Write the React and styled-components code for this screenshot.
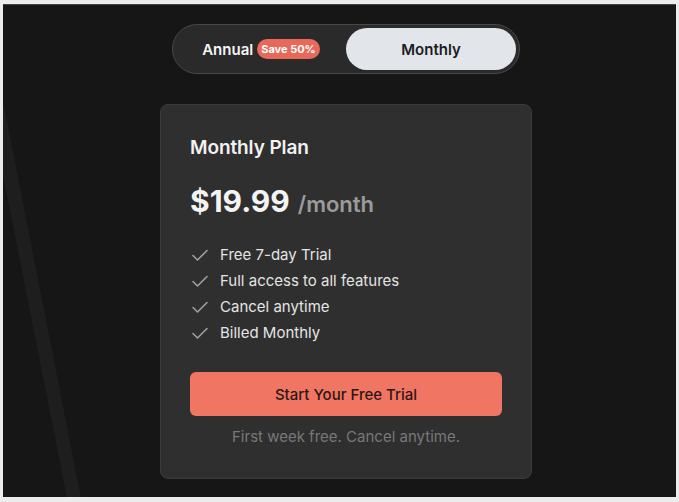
import React, { useState } from "react";
import styled, { createGlobalStyle } from "styled-components";

const Global = createGlobalStyle`
  html, body { margin: 0; padding: 0; background: #ececec; }
  body { font-family: Inter, "Noto Sans", "Liberation Sans", sans-serif; }
  * { box-sizing: border-box; }
`;

const Frame = styled.div`
  position: relative;
  margin: 4px 3px 5px 3px;
  height: 493px;
  background: #161616;
  overflow: hidden;
  display: flex;
  flex-direction: column;
  align-items: center;
  padding: 19px 0 0 13px;
  border-top: 1px solid #444;
`;

const Streak = styled.svg`
  position: absolute;
  left: 0;
  top: 0;
  pointer-events: none;
`;

const Toggle = styled.div`
  position: relative;
  width: 348px;
  height: 50px;
  padding: 3px;
  border-radius: 25px;
  background: #2a2a2a;
  border: 1px solid #474747;
  display: grid;
  grid-template-columns: 1fr 1fr;
`;

const ToggleOption = styled.button`
  border: none;
  border-radius: 22px;
  background: ${(p) => (p.$active ? "#e2e6ea" : "transparent")};
  color: ${(p) => (p.$active ? "#1c1c1c" : "#f4f4f4")};
  font-family: inherit;
  font-size: 15px;
  font-weight: 600;
  display: flex;
  align-items: center;
  justify-content: center;
  gap: 4px;
  cursor: pointer;
  padding: 0;
`;

const Badge = styled.span`
  background: #e8695a;
  color: #fff;
  font-size: 11px;
  font-weight: 700;
  padding: 3px 4px;
  border-radius: 10px;
  line-height: 14px;
`;

const Card = styled.div`
  margin-top: 30px;
  width: 372px;
  height: 375px;
  background: #2f2f2f;
  border: 1px solid #3b3b3b;
  border-radius: 8px;
  padding: 30px 29px 0 29px;
  display: flex;
  flex-direction: column;
`;

const Title = styled.h2`
  margin: 0;
  font-size: 19px;
  font-weight: 600;
  color: #f2f2f2;
  letter-spacing: -0.1px;
  line-height: 26px;
`;

const PriceRow = styled.div`
  margin-top: 21px;
  display: flex;
  align-items: baseline;
  gap: 8px;
`;

const Price = styled.span`
  font-size: 30px;
  font-weight: 700;
  color: #f4f4f4;
  line-height: 38px;
`;

const Period = styled.span`
  font-size: 22px;
  font-weight: 600;
  color: #9b9b9b;
`;

const Features = styled.ul`
  list-style: none;
  margin: 25px 0 0 0;
  padding: 0;
  display: flex;
  flex-direction: column;
  gap: 6px;
`;

const Feature = styled.li`
  display: flex;
  align-items: center;
  gap: 10px;
  font-size: 15px;
  color: #e4e4e4;
  line-height: 20px;
`;

const Check = () => (
  <svg width="20" height="20" viewBox="0 0 20 20" fill="none">
    <path d="M3 10.5 L7.5 15 L17 5.5" stroke="#a0a0a0" strokeWidth="1.6" strokeLinecap="round" strokeLinejoin="round" />
  </svg>
);

const CTA = styled.button`
  margin-top: 29px;
  height: 44px;
  width: 100%;
  border: none;
  border-radius: 6px;
  background: #f07562;
  color: #2c1713;
  font-family: inherit;
  font-size: 15px;
  font-weight: 500;
  cursor: pointer;
`;

const Note = styled.p`
  margin: 11px 0 0 0;
  text-align: center;
  font-size: 15px;
  color: #787878;
  line-height: 20px;
`;

const features = [
  "Free 7-day Trial",
  "Full access to all features",
  "Cancel anytime",
  "Billed Monthly",
];

export default function App() {
  const [plan, setPlan] = useState("monthly");
  return (
    <>
      <Global />
      <Frame>
        <Streak width="120" height="493" viewBox="0 0 120 493">
          <polygon points="0,100 2,106 78,493 64,493 0,170" fill="#1e1e1e" />
        </Streak>
        <Toggle>
          <ToggleOption $active={plan === "annual"} onClick={() => setPlan("annual")}>
            Annual <Badge>Save 50%</Badge>
          </ToggleOption>
          <ToggleOption $active={plan === "monthly"} onClick={() => setPlan("monthly")}>
            Monthly
          </ToggleOption>
        </Toggle>
        <Card>
          <Title>Monthly Plan</Title>
          <PriceRow>
            <Price>$19.99</Price>
            <Period>/month</Period>
          </PriceRow>
          <Features>
            {features.map((f) => (
              <Feature key={f}>
                <Check />
                {f}
              </Feature>
            ))}
          </Features>
          <CTA>Start Your Free Trial</CTA>
          <Note>First week free. Cancel anytime.</Note>
        </Card>
      </Frame>
    </>
  );
}
